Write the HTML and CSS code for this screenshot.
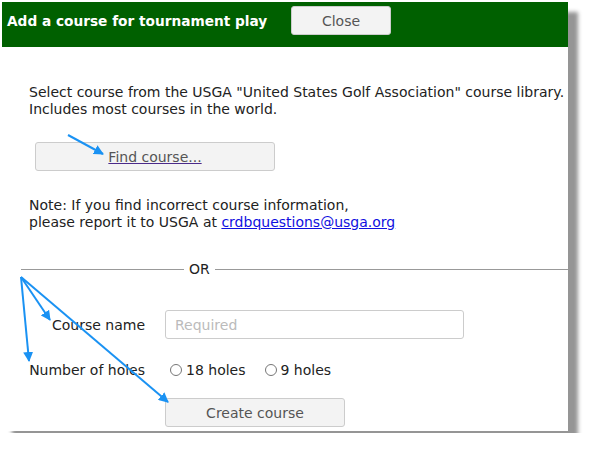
FILE: index.html
```html
<!DOCTYPE html>
<html lang="en">
  <head>
    <meta charset="UTF-8" />
    <title>Add a course</title>
    <link rel="stylesheet" href="styles.css">
  </head>
  <body>
    <div class="dialog">
      <div class="header">
        <span class="title">Add a course for tournament play</span>
        <button class="btn close">Close</button>
      </div>
      <div class="body">
        <p class="intro">
          Select course from the USGA "United States Golf Association" course library.<br />
          Includes most courses in the world.
        </p>
        <button class="btn find"><a href="#">Find course...</a></button>
        <p class="note">
          Note: If you find incorrect course information,<br />
          please report it to USGA at <a class="mail" href="#">crdbquestions@usga.org</a>
        </p>
      </div>
      <div class="divider"><span>OR</span></div>
      <div class="form">
        <div class="row">
          <label class="label">Course name</label>
          <input class="field" type="text" placeholder="Required" />
        </div>
        <div class="row holes">
          <label class="label">Number of holes</label>
          <div class="radios">
            <label class="radio"><input type="radio" name="holes" />18 holes</label>
            <label class="radio"><input type="radio" name="holes" />9 holes</label>
          </div>
        </div>
        <div class="row">
          <span class="label"></span>
          <button class="btn create">Create course</button>
        </div>
      </div>
      <!-- callout arrows -->
      <svg class="arrows" width="566" height="429" viewBox="2 2 566 429">
        <defs>
          <marker id="head" viewBox="0 0 10 10" refX="9" refY="5" markerWidth="5" markerHeight="5" orient="auto">
            <path d="M0 0 L10 5 L0 10 z" fill="#1a92f3" />
          </marker>
        </defs>
        <g stroke="#1a92f3" stroke-width="2" fill="none" marker-end="url(#head)">
          <line x1="68" y1="135" x2="103" y2="154" />
          <line x1="21" y1="277" x2="50" y2="320" />
          <line x1="21" y1="277" x2="29" y2="361" />
          <line x1="21" y1="277" x2="168" y2="402" />
        </g>
      </svg>
    </div>
  </body>
</html>
```

FILE: styles.css
```css
body {
  margin: 0;
  background: #fff;
  font-family: "DejaVu Sans", Verdana, sans-serif;
  font-size: 14px;
  color: #222;
}
.dialog {
  position: relative;
  margin: 2px;
  width: 566px;
  height: 429px;
  background: #fff;
  box-shadow: 10px 10px 4px #959595;
}
.header {
  display: flex;
  align-items: center;
  height: 45px;
  padding-left: 5px;
  background: #006000;
}
.title {
  color: #fff;
  font-weight: bold;
  font-size: 13.7px;
  width: 284px;
  margin-top: -8px;
}
.btn {
  font-family: inherit;
  font-size: 14px;
  color: #555;
  background: #f3f3f3;
  border: 1px solid #ccc;
  border-radius: 3px;
  height: 29px;
  padding: 0;
  cursor: pointer;
}
.close {
  width: 100px;
  margin-top: -8px;
}
.body {
  padding: 37px 0 0 27px;
}
.body p {
  margin: 0;
  line-height: 17px;
}
.find {
  display: block;
  width: 240px;
  margin: 24px 0 0 6px;
}
.find a {
  color: #555;
  text-decoration-color: #4b2a8a;
}
.note {
  margin-top: 26px !important;
}
.mail {
  color: #1010e0;
}
.divider {
  display: flex;
  align-items: center;
  gap: 5px;
  margin: 30px 0 0 19px;
  line-height: 17px;
}
.divider::before,
.divider::after {
  content: "";
  height: 1px;
  background: #999;
}
.divider::before {
  width: 163px;
}
.divider::after {
  flex: 1;
}
.form {
  display: flex;
  flex-direction: column;
  margin-top: 31px;
}
.row {
  display: flex;
  align-items: center;
  min-height: 31px;
  margin-top: 12px;
}
.row:first-child {
  margin-top: 0;
}
.holes {
  margin-top: 14px;
}
.label {
  width: 143px;
  text-align: right;
  padding-right: 20px;
}
.field {
  width: 299px;
  height: 29px;
  box-sizing: border-box;
  border: 1px solid #ccc;
  border-radius: 3px;
  padding: 0 9px;
  font-family: inherit;
  font-size: 14px;
}
.field::placeholder {
  color: #bbb;
}
.radios {
  display: flex;
  gap: 14px;
}
.radio {
  display: flex;
  align-items: center;
}
.radio input {
  width: 12px;
  height: 12px;
  margin: 0 4px 0 5px;
}
.create {
  width: 180px;
}
.arrows {
  position: absolute;
  left: 0;
  top: 0;
  pointer-events: none;
}
```
